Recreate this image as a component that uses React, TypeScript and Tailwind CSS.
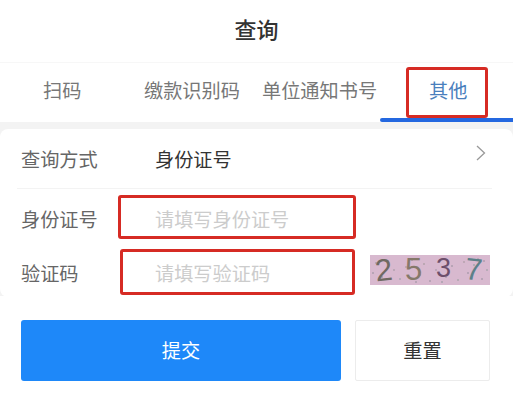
const cjk = { fontFamily: '"Noto Sans CJK SC", "Liberation Sans", sans-serif' };

const dots: [number, number, string][] = [
  [6, 8, "#8f8a96"], [12, 22, "#7f8f8a"], [18, 6, "#9a8fa0"], [30, 24, "#8f9aa0"], [36, 12, "#a08f90"],
  [42, 5, "#8f8a96"], [50, 20, "#7f8f9a"], [54, 9, "#9a8f90"], [60, 26, "#8f8a96"], [66, 15, "#a08fa0"],
  [70, 6, "#7f8a96"], [76, 22, "#9a9096"], [82, 11, "#8f8a96"], [88, 25, "#8f9a96"], [94, 7, "#a08f96"],
  [98, 18, "#8f8a9a"], [104, 10, "#7f9a96"], [112, 24, "#8f8a96"], [114, 6, "#9a8a96"], [117, 15, "#8f9a9a"],
  [3, 18, "#8f8a96"], [24, 15, "#9a8f96"], [46, 27, "#8f8a96"], [72, 27, "#8a8f96"], [108, 4, "#9a8f96"],
];

function Field({ label, placeholder, children }: { label: string; placeholder: string; children?: React.ReactNode }) {
  return (
    <div className="flex h-[54px] items-center pl-[21px] pt-[5px]">
      <span className="w-[134px] shrink-0 text-[19.2px] leading-[26px] text-[#666]">{label}</span>
      <span className="w-[215px] shrink-0 text-[19.2px] leading-[26px] text-[#ccc]">{placeholder}</span>
      {children}
    </div>
  );
}

export default function App() {
  return (
    <div className="relative h-[408px] w-[513px] overflow-hidden bg-white" style={cjk}>
      <header className="flex h-[62px] items-center justify-center pb-[6px] text-[22px] font-medium text-[#333]">
        查询
      </header>

      <nav className="relative flex h-[60px] border-t border-[#f7f7f7] text-[19.2px] text-[#777]">
        <span className="absolute left-[43px] top-[14px] leading-[26px]">扫码</span>
        <span className="absolute left-[144px] top-[14px] leading-[26px]">缴款识别码</span>
        <span className="absolute left-[262px] top-[14px] leading-[26px]">单位通知书号</span>
        <span className="absolute left-[429px] top-[14px] leading-[26px] text-[#4a7fbd]">其他</span>
      </nav>

      <main className="flex h-[174px] flex-col bg-[#f3f3f3] pt-[7px]">
        <section className="flex-1 rounded-[8px] bg-white">
          <div className="ml-[17px] mr-[21px] flex h-[60px] items-center border-b border-[#f3f3f3] pl-[4px] pr-[5px]">
            <span className="w-[134px] shrink-0 text-[19.2px] leading-[26px] text-[#666]">查询方式</span>
            <span className="flex-1 text-[19.2px] leading-[26px] text-[#333]">身份证号</span>
            <svg width="12" height="18" viewBox="0 0 12 18" fill="none" className="mb-[12px] text-[#999]">
              <path d="M2 2l7.5 7L2 16" stroke="currentColor" strokeWidth="1.3" />
            </svg>
          </div>
          <Field label="身份证号" placeholder="请填写身份证号" />
          <Field label="验证码" placeholder="请填写验证码">
            <div
              className="relative mb-[5px] flex h-[30px] w-[120px] shrink-0 items-center bg-[#d8b9cf] pl-[5px] text-[31px] leading-[30px]"
              style={{ fontFamily: '"Liberation Sans", sans-serif' }}
            >
              <svg className="absolute inset-0" width="120" height="30">
                {dots.map(([x, y, c], i) => (
                  <circle key={i} cx={x} cy={y} r="0.8" fill={c} />
                ))}
              </svg>
              <span className="relative w-[30px] -rotate-6 text-[#6f6a62]">2</span>
              <span className="relative w-[31px] text-[#85786a]">5</span>
              <span className="relative mb-[4px] w-[29px] text-[27px] text-[#6d4f6b]">3</span>
              <span className="relative rotate-6 text-[#5d8088]">7</span>
            </div>
          </Field>
        </section>
      </main>

      <div className="flex gap-[14px] pl-[21px] pt-[24px]">
        <button className="h-[61px] w-[320px] rounded-[3px] bg-[#1e88f9] text-[19.2px] text-white">提交</button>
        <button className="h-[61px] w-[135px] rounded-[2px] border border-[#ececec] bg-white text-[19.2px] text-[#333]">重置</button>
      </div>

      <div className="absolute left-[380px] top-[118px] h-[4px] w-[133px] rounded-l-full bg-[#2468e0]" />
      <div className="absolute left-[406px] top-[67px] h-[51px] w-[82px] rounded-[3px] border-[3px] border-[#d62b24]" />
      <div className="absolute left-[118px] top-[195px] h-[44px] w-[238px] rounded-[3px] border-[3px] border-[#d62b24]" />
      <div className="absolute left-[120px] top-[249px] h-[46px] w-[235px] rounded-[3px] border-[3px] border-[#d62b24]" />
    </div>
  );
}
